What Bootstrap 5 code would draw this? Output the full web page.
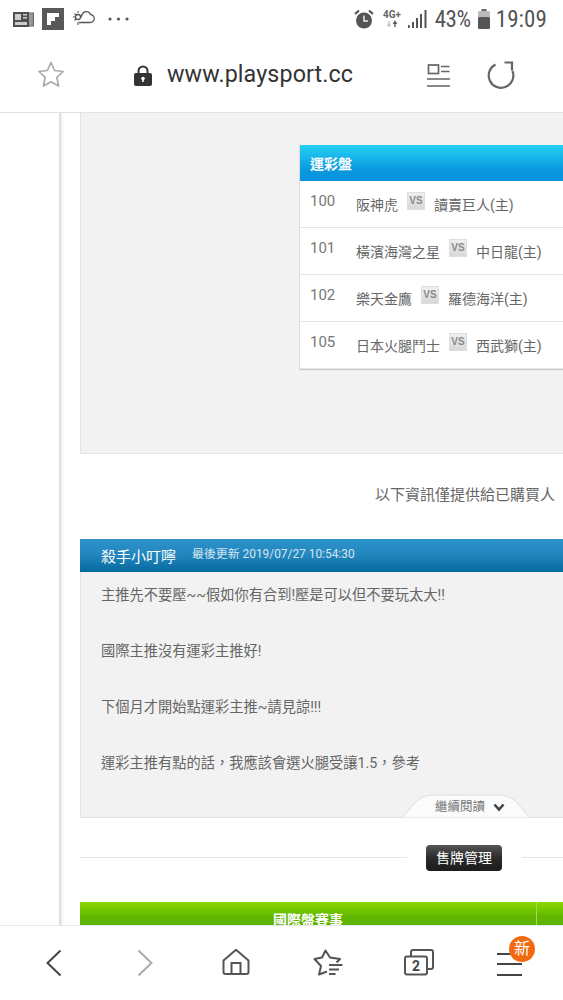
<!DOCTYPE html>
<html lang="zh-Hant">
<head>
<meta charset="utf-8">
<title>playsport</title>
<link href="https://cdn.jsdelivr.net/npm/bootstrap@5.3.0/dist/css/bootstrap.min.css" rel="stylesheet">
<style>
html,body{height:1000px;overflow:hidden;background:#fff}
body{font-family:Roboto,"Noto Sans CJK TC",sans-serif;color:#666}
.shell{height:1000px;width:563px;overflow:hidden}
.topbar{height:113px;border-bottom:1px solid #e3e3e3;flex:none}
.statusrow{height:38px;padding:0 16px 0 13px}
.statusrow svg{display:block;flex:none}
.stat-txt{font-size:23px;color:#555;line-height:1;font-stretch:condensed;letter-spacing:-.4px}
.stat-clock{letter-spacing:.1px;margin-left:6px}
.stat-batt{margin-left:7px}
.stat-4g{margin-left:9px}
.stat-sig{margin-left:5px}
.stat-pct{margin-left:8px}
.stat-dots{margin-left:13px}
.tool-row{height:74px}
.tool-star{margin-left:37px}
.tool-lock{margin-left:69px}
.url-txt{font-size:23.3px;color:#333;margin-left:15px;line-height:1;width:187px;white-space:nowrap;letter-spacing:.1px}
.tool-read{margin-left:73px}
.tool-reload{margin-left:37px}
.page-area{flex:1 1 auto;min-height:0;overflow:hidden}
.rail{width:59px;flex:none}
.rail-sep{width:5px;flex:none;background:linear-gradient(90deg,#d6d6d6,#f3f3f3 60%,#fff)}
.page-main{padding-left:16px;width:499px;flex:none}
.grey-panel{height:341px;background:#f2f2f2;border:1px solid #e4e4e4;border-top:0;border-right:0;padding:32px 0 0 219px}
.odds-box{background:#fff;box-shadow:0 1px 1px rgba(0,0,0,.16),-1px 0 1px rgba(0,0,0,.06);width:300px}
.odds-head{height:36px;background:linear-gradient(180deg,#25d0f4,#0a98df 70%,#0a93dc);color:#fff;font-weight:700;font-size:14px;padding-left:10px;line-height:38px}
.odds-row{height:47px;border-bottom:1px solid #e6e6e6;padding-left:10px;font-size:14px;color:#666;padding-top:2px}
.odds-num{width:46px;font-size:15px;color:#777;margin-top:-7px;flex:none}
.vs-tag{width:18px;height:18px;margin:-8px 9px 0;background:linear-gradient(180deg,#efefef,#d8d8d8);border:1px solid #dedede;color:#8a8a8a;font-size:10px;font-weight:700;line-height:15px;text-align:center;flex:none;font-family:"Liberation Sans",sans-serif}
.notice-txt{height:85px;font-size:15px;color:#666;padding-right:8px;line-height:1;padding-top:34px;text-align:right}
.blog-box{height:279px;background:#f2f2f2;border:1px solid #e2e2e2;border-top:0;border-right:0;position:relative}
.blog-head{height:33px;background:linear-gradient(180deg,#2b92ca,#2587bf 45%,#056a9f);color:#fff;padding-left:21px;margin-left:-1px}
.blog-name{font-size:15px;line-height:1;margin-top:3px}
.blog-meta{font-size:11.900px;color:#d4e6f1;margin-left:16px;line-height:1;margin-top:-1px}
.blog-body{padding:9px 0 0 20px;font-size:14.250px;line-height:28px;color:#666}
.more-tab{position:absolute;left:319px;top:255px;width:132px;height:24px}
.more-shape{position:absolute;left:0;top:0}
.more-label{position:relative;font-size:12.500px;color:#777;line-height:1;padding:7px 0 0 35px}
.more-chev{margin-left:8px}
.sale-row{height:84px;padding-bottom:5px}
.sale-line{height:1px;background:#e6e6e6}
.sale-line-end{width:41px}
.sale-btn{width:76px;height:26px;margin:0 20px 0 19px;border-radius:4px;background:linear-gradient(180deg,#555,#2b2b2b 50%,#1c1c1c);color:#fff;font-size:14px;line-height:26px;text-align:center;flex:none}
.green-head{height:30px;background:linear-gradient(180deg,#8ad800,#60b600 50%,#58b000);color:#fff;font-weight:700;font-size:14px;text-align:center;line-height:36px}
.green-a{width:457px;border-right:1px solid #a2d860;flex:none}
.green-b{flex:1 1 auto}
.botbar{height:75px;flex:none;background:#fff;border-top:1px solid #e8e8e8;position:relative;padding-top:23px}
.botbar svg{display:block;flex:none}
.bot-back{margin-left:45px}
.bot-fwd{margin-left:73px}
.bot-home{margin-left:68px}
.bot-fav{margin-left:63px}
.bot-tabs{margin-left:61px}
.bot-menu{margin-left:63px}
.new-dot{position:absolute;left:509px;top:10px;width:26px;height:26px;border-radius:50%;background:#f26a10;color:#fff;font-size:16px;line-height:26px;text-align:center}
</style>
</head>
<body>
<div class="shell d-flex flex-column">
  <div class="topbar">
    <div class="statusrow d-flex align-items-center">
      <svg width="21" height="17" viewBox="0 0 21 17"><path d="M0 1h16v15H0z" fill="#4f4f4f"/><path d="M2 3h6v6H2zM10 3h4v1.500h-4zM10 6h4v1.500h-4zM2 11h12v3H2z" fill="#ccc"/><path d="M16 2h4.500v13H16" fill="#999" stroke="#666" stroke-width="1.200"/></svg>
      <svg class="ms-2" width="22" height="22" viewBox="0 0 22 22"><path d="M0 0h22v22H0z" fill="#595959"/><path d="M5 5h12v4h-4v4H9v4H5z" fill="#fff"/></svg>
      <svg class="ms-2" width="23" height="20" viewBox="0 0 23 20" fill="none" stroke="#555" stroke-width="1.300"><path d="M7 13.500h11a4 4 0 0 0 .5-8 4.500 4.500 0 0 0-8.500.5 3.500 3.500 0 0 0-1 2.500"/><circle cx="6" cy="8" r="2.500"/><path d="M6 2v2M1 8h2M2.500 4.500 4 6M2.500 11.500 4 10M6 13v3" stroke-width="1.100"/></svg>
      <svg class="stat-dots" width="21" height="4" viewBox="0 0 21 4"><g fill="#555"><circle cx="2" cy="2" r="1.600"/><circle cx="10.500" cy="2" r="1.600"/><circle cx="19" cy="2" r="1.600"/></g></svg>
      <div class="flex-grow-1"></div>
      <svg width="20" height="21" viewBox="0 0 20 21"><circle cx="10" cy="11.500" r="8" fill="#555"/><path d="M10 6.500v5.500h4" fill="none" stroke="#eee" stroke-width="1.500"/><path d="M1 5 5 1.500M19 5l-4-3.500" stroke="#555" stroke-width="2.200"/></svg>
      <svg class="stat-4g" width="20" height="20" viewBox="0 0 20 20"><text x="0" y="9" font-size="10" font-weight="700" fill="#666" font-family="Roboto,sans-serif">4G+</text><path d="M6 12v5M4.500 15.500 6 17.500l1.500-2" stroke="#aaa" fill="none"/><path d="M12 18v-5M10.300 15l1.700-2.500 1.700 2.500" stroke="#555" fill="none" stroke-width="1.300"/></svg>
      <svg class="stat-sig" width="19" height="18" viewBox="0 0 19 18"><g fill="#555"><path d="M0 15h1.800v3H0zM4 12h2v6H4zM8 8h2v10H8zM12 4h2v14h-2zM16.500 0h2v18h-2z"/></g></svg>
      <span class="stat-txt stat-pct">43%</span>
      <svg class="stat-batt" width="12" height="20" viewBox="0 0 12 20"><path d="M3.500 0h5v2h-5z" fill="#666"/><rect x="0" y="2" width="12" height="18" rx="1.500" fill="#bbb"/><rect x="0" y="8" width="12" height="12" rx="1.500" fill="#555"/></svg>
      <span class="stat-txt stat-clock">19:09</span>
    </div>
    <div class="tool-row d-flex align-items-center">
      <svg class="tool-star" width="28" height="28" viewBox="0 0 28 28"><path d="M14 1.500l3.600 8 8.600 1-6.400 5.900 1.800 8.600L14 20.700l-7.600 4.300 1.800-8.600-6.400-5.900 8.600-1z" fill="none" stroke="#aaa" stroke-width="1.700" stroke-linejoin="round"/></svg>
      <svg class="tool-lock" width="18" height="21" viewBox="0 0 18 21"><path d="M4.500 9V6a4.500 4.500 0 0 1 9 0v3" fill="none" stroke="#333" stroke-width="2"/><rect x="0" y="8" width="18" height="13" rx="2" fill="#333"/><circle cx="9" cy="13.500" r="1.800" fill="#fff"/><path d="M8.200 14h1.600v3H8.200z" fill="#fff"/></svg>
      <span class="url-txt">www.playsport.cc</span>
      <svg class="tool-read" width="23" height="23" viewBox="0 0 23 23" fill="none" stroke="#666" stroke-width="1.700"><rect x="1.500" y="1" width="10" height="8.500"/><path d="M14 2.500h8.500M14 7.500h8.500M0 15h23M0 22h23"/></svg>
      <svg class="tool-reload" width="28" height="30" viewBox="0 0 28 30" fill="none" stroke="#666" stroke-width="2.200"><path d="M8.500 4.500A12.300 12.300 0 1 0 25.500 11"/><path d="M17.500 2.500H25V10.500"/></svg>
    </div>
  </div>
  <div class="page-area d-flex">
    <div class="rail"></div>
    <div class="rail-sep"></div>
    <div class="page-main">
      <div class="grey-panel">
        <div class="odds-box">
          <div class="odds-head">運彩盤</div>
          <div class="odds-row d-flex align-items-center"><span class="odds-num">100</span><span>阪神虎</span><span class="vs-tag">VS</span><span>讀賣巨人(主)</span></div>
          <div class="odds-row d-flex align-items-center"><span class="odds-num">101</span><span>橫濱海灣之星</span><span class="vs-tag">VS</span><span>中日龍(主)</span></div>
          <div class="odds-row d-flex align-items-center"><span class="odds-num">102</span><span>樂天金鷹</span><span class="vs-tag">VS</span><span>羅德海洋(主)</span></div>
          <div class="odds-row d-flex align-items-center"><span class="odds-num">105</span><span>日本火腿鬥士</span><span class="vs-tag">VS</span><span>西武獅(主)</span></div>
        </div>
      </div>
      <div class="notice-txt">以下資訊僅提供給已購買人</div>
      <div class="blog-box">
        <div class="blog-head d-flex align-items-center"><span class="blog-name">殺手小叮嚀</span><span class="blog-meta">最後更新 2019/07/27 10:54:30</span></div>
        <div class="blog-body">主推先不要壓~~假如你有合到!壓是可以但不要玩太大!!<br><br>國際主推沒有運彩主推好!<br><br>下個月才開始點運彩主推~請見諒!!!<br><br>運彩主推有點的話，我應該會選火腿受讓1.5，參考</div>
        <div class="more-tab">
          <svg class="more-shape" width="132" height="24" viewBox="0 0 132 24"><path d="M0 24C10 20 13 2 32 1h68c19 1 22 19 32 23z" fill="#fbfbfb" stroke="#dcdcdc"/></svg>
          <div class="more-label d-flex align-items-center">繼續閱讀<svg class="more-chev" width="12" height="9" viewBox="0 0 12 9"><path d="M1.500 1.500 6 6.500l4.500-5" fill="none" stroke="#444" stroke-width="2.600"/></svg></div>
        </div>
      </div>
      <div class="sale-row d-flex align-items-center">
        <div class="sale-line flex-grow-1"></div>
        <div class="sale-btn">售牌管理</div>
        <div class="sale-line sale-line-end"></div>
      </div>
      <div class="green-head d-flex"><div class="green-a">國際盤賽事</div><div class="green-b"></div></div>
    </div>
  </div>
  <div class="botbar d-flex">
    <svg class="bot-back" width="18" height="28" viewBox="0 0 18 28"><path d="M15.500 1.500 2.500 14l13 12.500" fill="none" stroke="#444" stroke-width="2"/></svg>
    <svg class="bot-fwd" width="18" height="28" viewBox="0 0 18 28"><path d="M2.500 1.500 15.500 14l-13 12.500" fill="none" stroke="#aaa" stroke-width="2"/></svg>
    <svg class="bot-home" width="28" height="28" viewBox="0 0 28 28"><path d="M1.500 11.500 14 .8l12.500 10.700V23a2 2 0 0 1-2 2H3.500a2 2 0 0 1-2-2z" fill="none" stroke="#555" stroke-width="2" stroke-linejoin="round"/><path d="M9.500 25V14h9v11" fill="none" stroke="#555" stroke-width="2"/></svg>
    <svg class="bot-fav" width="30" height="28" viewBox="0 0 30 28"><path d="M14 22.500 6 25.500l2-8.500L1.500 10 9 8.500 12.500 1.500 17 8.500 27 10l-3.500 3.500" fill="none" stroke="#555" stroke-width="2" stroke-linejoin="round"/><path d="M16 16h13.500M16 20.500h10M16 25h6.500" stroke="#555" stroke-width="2"/></svg>
    <svg class="bot-tabs" width="30" height="28" viewBox="0 0 30 28"><path d="M7 7V3a2 2 0 0 1 2-2h18a2 2 0 0 1 2 2v15a2 2 0 0 1-2 2h-4" fill="none" stroke="#555" stroke-width="2"/><rect x="1" y="7.500" width="22" height="18" rx="2" fill="#fff" stroke="#555" stroke-width="2"/><text x="12" y="22" font-size="14" font-weight="700" fill="#444" text-anchor="middle" font-family="Roboto,sans-serif">2</text></svg>
    <svg class="bot-menu" width="26" height="28" viewBox="0 0 26 28"><path d="M0 5h25M0 15h25M0 26h25" stroke="#444" stroke-width="2"/></svg>
    <div class="new-dot">新</div>
  </div>
</div>
<script src="https://cdn.jsdelivr.net/npm/bootstrap@5.3.0/dist/js/bootstrap.bundle.min.js"></script>
</body>
</html>
